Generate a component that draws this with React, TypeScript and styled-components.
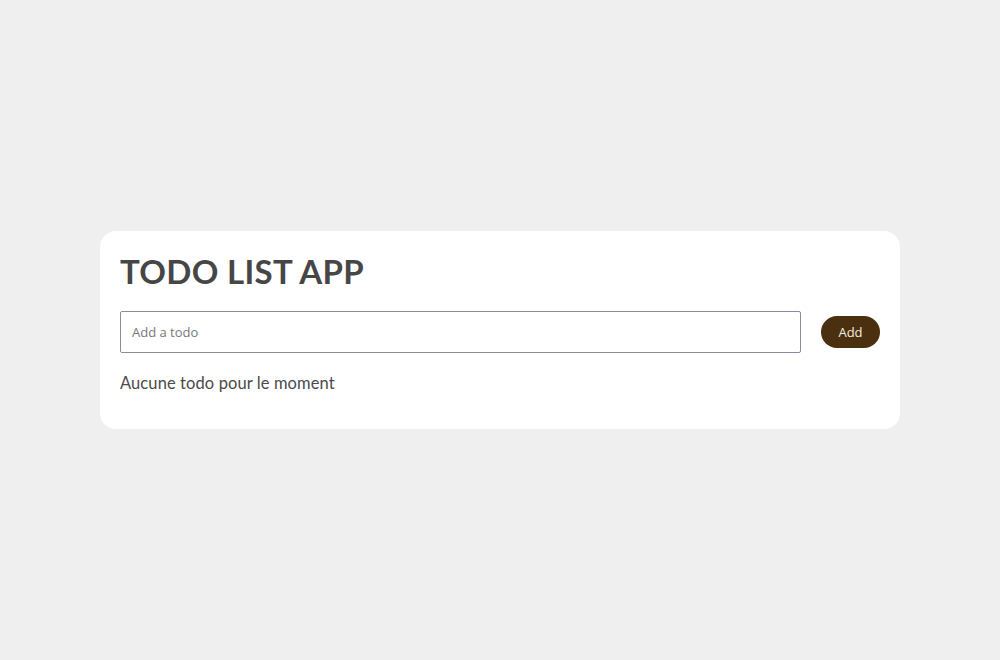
import React, { useState } from "react";
import styled, { createGlobalStyle } from "styled-components";

const Global = createGlobalStyle`
  html, body { margin: 0; padding: 0; background: #efefef; }
  body { font-family: Lato, "Open Sans", sans-serif; }
  #root { min-height: 660px; display: flex; align-items: center; justify-content: center; }
`;

const Card = styled.div`
  box-sizing: border-box;
  width: 800px;
  background: #ffffff;
  border-radius: 16px;
  padding: 20px 20px 34px;
  display: flex;
  flex-direction: column;
`;

const Title = styled.h1`
  margin: 0;
  font-family: Lato, sans-serif;
  font-weight: 700;
  font-size: 33px;
  line-height: 40px;
  color: #464646;
  letter-spacing: 0.3px;
`;

const Form = styled.form`
  display: flex;
  align-items: center;
  gap: 20px;
  margin-top: 20px;
`;

const Input = styled.input`
  flex: 1;
  box-sizing: border-box;
  height: 42px;
  border: 1px solid #8c8a9c;
  border-radius: 2px;
  padding: 0 11px;
  font-family: "Open Sans", sans-serif;
  font-size: 13px;
  color: #333;
  outline: none;
  &::placeholder { color: #777; }
`;

const Button = styled.button`
  height: 32px;
  width: 59px;
  border: none;
  border-radius: 16px;
  background: #4a300e;
  color: #f3ede4;
  font-family: "Open Sans", sans-serif;
  font-size: 13px;
  cursor: pointer;
`;

const Empty = styled.p`
  margin: 18px 0 0;
  font-family: Lato, sans-serif;
  font-size: 16.5px;
  line-height: 24px;
  color: #4a4a4a;
  letter-spacing: 0.1px;
`;

export default function App() {
  const [value, setValue] = useState("");
  return (
    <>
      <Global />
      <Card>
        <Title>TODO LIST APP</Title>
        <Form onSubmit={(e) => e.preventDefault()}>
          <Input placeholder="Add a todo" value={value} onChange={(e) => setValue(e.target.value)} />
          <Button type="submit">Add</Button>
        </Form>
        <Empty>Aucune todo pour le moment</Empty>
      </Card>
    </>
  );
}
